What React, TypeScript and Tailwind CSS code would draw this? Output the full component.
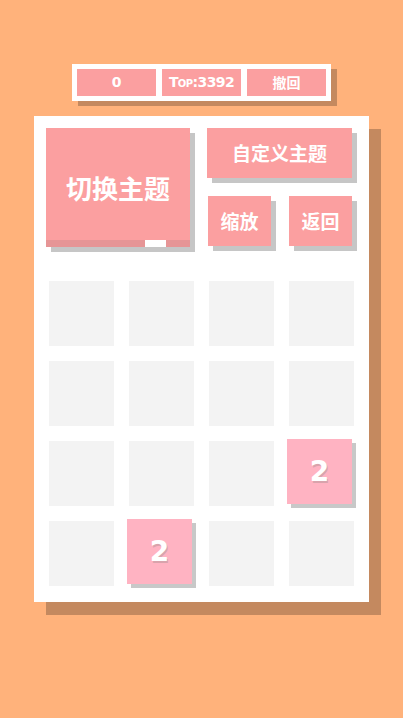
import React from "react";

type Cell = number | null;

const board: Cell[][] = [
  [null, null, null, null],
  [null, null, null, null],
  [null, null, null, 2],
  [null, 2, null, null],
];

const cjk = { fontFamily: "'Noto Sans CJK SC', 'Noto Sans', sans-serif" };
const chunky = { fontFamily: "'DejaVu Sans', 'Noto Sans', sans-serif" };

function Tile({ value }: { value: Cell }) {
  if (value === null) {
    return <div className="w-[65px] h-[65px] bg-[#f3f3f3]" />;
  }
  return (
    <div className="w-[65px] h-[65px] flex items-center justify-center bg-[#ffb3c2] -translate-x-[2px] -translate-y-[2px] shadow-[4px_4px_0_#c8c8c8]">
      <span
        className="text-white text-[28px] font-black [text-shadow:1px_2px_0_#d9a3ac]"
        style={chunky}
      >
        {value}
      </span>
    </div>
  );
}

export default function App() {
  return (
    <div className="w-full h-[718px] bg-[#ffb27b] flex flex-col items-center pt-[64px]">
      {/* score bar */}
      <div className="flex gap-[6px] p-[5px] bg-white shadow-[6px_5px_0_#c4895f]">
        <div className="w-[79px] h-[27px] bg-[#fb9fa0] flex items-center justify-center text-white text-[14px] font-black" style={chunky}>
          0
        </div>
        <div className="w-[79px] h-[27px] bg-[#fb9fa0] flex items-center justify-center text-white text-[14px] font-black [font-variant:small-caps] tracking-[-0.6px]" style={chunky}>
          Top:3392
        </div>
        <div className="w-[79px] h-[27px] bg-[#fb9fa0] flex items-center justify-center text-white text-[14px] font-bold" style={cjk}>
          撤回
        </div>
      </div>

      {/* main panel */}
      <div className="mt-[15px] w-[335px] bg-white shadow-[12px_13px_0_#c4895f] pt-[12px] pb-[16px]">
        <div className="flex pl-[12px] gap-[17px]">
          <div className="w-[144px] h-[119px] bg-[#fb9fa0] flex flex-col shadow-[5px_5px_0_#c6c6c6]">
            <div className="flex-1 flex items-center justify-center text-white text-[26px] font-bold pt-[6px]" style={cjk}>
              切换主题
            </div>
            <div className="h-[7px] bg-[#e69596] flex">
              <div className="ml-[99px] w-[21px] h-full bg-white" />
            </div>
          </div>
          <div className="flex flex-col gap-[18px]">
            <div className="w-[145px] h-[50px] bg-[#fb9fa0] flex items-center justify-center text-white text-[19px] font-bold shadow-[5px_5px_0_#c6c6c6]" style={cjk}>
              自定义主题
            </div>
            <div className="flex gap-[18px] pl-[1px]">
              <div className="w-[63px] h-[50px] bg-[#fb9fa0] flex items-center justify-center text-white text-[19px] font-bold shadow-[5px_5px_0_#c6c6c6]" style={cjk}>
                缩放
              </div>
              <div className="w-[63px] h-[50px] bg-[#fb9fa0] flex items-center justify-center text-white text-[19px] font-bold shadow-[5px_5px_0_#c6c6c6]" style={cjk}>
                返回
              </div>
            </div>
          </div>
        </div>

        {/* board */}
        <div className="mt-[34px] px-[15px] grid grid-cols-4 gap-[15px]">
          {board.flat().map((v, i) => (
            <Tile key={i} value={v} />
          ))}
        </div>
      </div>
    </div>
  );
}
